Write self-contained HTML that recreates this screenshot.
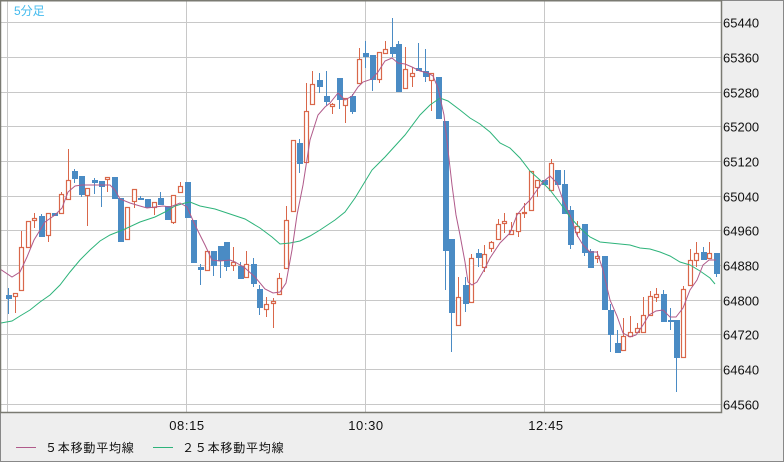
<!DOCTYPE html>
<html><head><meta charset="utf-8"><style>
html,body{margin:0;padding:0;background:#eeeeee;}
body{width:784px;height:462px;overflow:hidden;position:relative;font-family:"Liberation Sans","Noto Sans CJK JP",sans-serif;}
svg{position:absolute;left:0;top:0;}
</style></head><body>
<svg id="c" width="784" height="462" xmlns="http://www.w3.org/2000/svg">
<rect x="0" y="0" width="784" height="462" fill="#eeeeee"/>
<rect x="0.5" y="0.5" width="783" height="461" fill="none" stroke="#888" stroke-width="1"/>
<rect x="1" y="1" width="720" height="411" fill="#ffffff"/>
<g id="grid" stroke="#c8c8c8" stroke-width="1"></g>
<g id="cand"></g>
<polyline id="ma25" fill="none" stroke="#2db37a" stroke-width="1"/>
<polyline id="ma5" fill="none" stroke="#b05a8a" stroke-width="1"/>
<path d="M0.5 0 V412.5 H721.5 V0" fill="none" stroke="#7a7a72" stroke-width="1.5"/>
<line x1="0" y1="0.75" x2="722" y2="0.75" stroke="#7a7a72" stroke-width="1.5"/>
<text x="14" y="15" font-size="12" fill="#44bbee" font-family="Liberation Sans,'Noto Sans CJK JP',sans-serif">5分足</text>
<g id="labels" font-size="13" fill="#111" font-family="Liberation Sans,sans-serif"></g>
<g font-size="13" fill="#111" text-anchor="middle" letter-spacing="0.6">
<text x="187" y="430">08:15</text><text x="366" y="430">10:30</text><text x="546" y="430">12:45</text>
</g>
<line x1="16" y1="447.5" x2="36" y2="447.5" stroke="#b05a8a"/>
<line x1="153" y1="447.5" x2="173" y2="447.5" stroke="#2db37a"/>
<g font-size="12" fill="#111" letter-spacing="0.8" font-family="'Liberation Sans','Noto Sans CJK JP',sans-serif">
<text x="45" y="452">５本移動平均線</text>
<text x="182" y="452">２５本移動平均線</text>
</g>
</svg>
<script>
var NS="http://www.w3.org/2000/svg";
function el(p,t,a){var e=document.createElementNS(NS,t);for(var k in a)e.setAttribute(k,a[k]);p.appendChild(e);return e;}
var gy=[22.5,57.5,92.5,126.5,161.5,196.5,230.5,265.5,300.5,334.5,369.5,404.5];
var lab=[65440,65360,65280,65200,65120,65040,64960,64880,64800,64720,64640,64560];
var g=document.getElementById('grid');
gy.forEach(function(y){el(g,'line',{x1:1,x2:721,y1:y,y2:y});});
[7.5,186.5,365.5,544.5].forEach(function(x){el(g,'line',{x1:x,x2:x,y1:1,y2:412});});
var L=document.getElementById('labels');
gy.forEach(function(y,i){var t=el(L,'text',{x:723,y:y+5});t.textContent=lab[i];});
var C=[
['d',295,298,288,314],['u',293,296,293,313],['u',247,290,231,290],['u',221,247,221,247],['u',218,220,213,228],
['d',216,236,214,236],['u',213,235,213,242],['d',213,215,213,215],['u',194,213,192,213],['u',180,199,149,199],
['d',171,178,169,183],['d',176,194,176,197],['u',188,195,188,226],['d',180,182,178,194],['d',181,186,181,207],
['u',177,179,177,192],['d',177,198,177,198],['d',198,241,198,241],['u',207,239,207,239],['u',189,201,189,208],
['d',198,199,196,199],['d',199,207,199,207],['u',202,207,202,215],['d',198,204,192,204],['d',206,219,206,219],
['u',195,222,195,224],['u',186,192,182,192],['d',182,217,182,217],['d',220,262,220,262],['d',267,269,264,285],
['u',251,270,251,270],['d',251,265,251,276],['d',246,260,246,278],['d',242,266,242,271],['u',262,265,247,271],
['d',266,278,262,278],['u',264,277,251,277],['d',264,283,258,287],['d',289,307,285,315],['u',304,309,297,317],
['u',301,303,298,328],['u',278,294,273,294],['u',220,268,206,268],['u',140,211,140,211],['d',143,163,139,173],
['u',111,162,83,162],['u',84,104,71,104],['d',80,86,73,93],['d',96,101,71,106],['u',104,106,103,114],
['d',78,99,78,109],['u',98,105,98,123],['d',96,111,94,114],['u',59,83,48,83],['d',53,56,41,68],
['d',55,79,55,91],['u',52,79,52,83],['u',49,53,41,53],['d',47,53,18,57],['d',44,91,41,91],
['u',69,88,47,88],['u',73,76,67,87],['d',68,70,43,70],['d',71,76,49,82],['u',73,80,73,111],
['d',77,118,77,118],['d',121,250,121,290],['d',239,312,239,352],['u',297,325,277,325],['d',285,303,277,312],
['u',258,302,254,302],['d',253,257,249,267],['u',254,267,245,272],['u',242,248,241,252],['u',224,239,219,239],
['u',221,223,213,233],['u',230,234,222,235],['u',213,231,213,237],['u',212,213,203,218],['u',171,210,171,210],
['u',180,187,180,197],['d',180,184,180,184],['u',163,190,159,190],['d',170,184,170,184],['d',184,213,170,213],
['d',210,244,206,249],['u',226,232,221,237],['d',224,252,224,256],['d',251,267,249,267],['u',256,258,251,263],
['d',256,309,256,309],['d',310,334,304,352],['d',343,352,330,352],['u',336,350,318,350],['u',332,336,316,336],
['u',328,332,323,332],['u',315,332,297,332],['u',296,315,291,315],['u',294,297,288,302],['d',294,321,290,321],
['d',320,321,308,330],['d',320,357,320,392],['u',289,357,286,357],['u',260,285,249,285],['u',253,260,242,267],
['d',252,259,247,259],['u',253,258,242,258],['d',253,273,253,277]];
var cg=document.getElementById('cand');
C.forEach(function(c,i){
 var x=Math.round(8+i*6.617);var up=c[0]=='u';var col=up?'#d9674a':'#4a8bc4';
 el(cg,'line',{x1:x+0.5,x2:x+0.5,y1:c[3],y2:c[4],stroke:col,'stroke-width':1});
 var h=Math.max(c[2]-c[1],1);
 if(up){el(cg,'rect',{x:x-1.5,y:c[1]+0.5,width:4,height:h,fill:'#fff',stroke:col,'stroke-width':1.2});}
 else{el(cg,'rect',{x:x-2,y:c[1],width:6,height:h+1,fill:col});}
});
var m5="0,269 12,277 20,272 27,257 34,240 45,222 55,215 62,208 68,192 75,186 82,185 100,185 110,185 115,190 120,199 130,203 140,206 147,208 155,207 163,206 170,207 180,203 187,207 195,225 205,245 212,260 220,261 230,260 235,262 245,268 255,277 265,289 273,293 280,292 286,283 292,250 297,215 303,185 310,140 318,115 325,107 330,103 338,93 345,100 352,96 358,87 363,82 372,79 378,72 385,61 392,58 398,63 405,64 412,67 420,71 428,73 433,76 438,88 444,115 448,150 452,185 456,215 460,235 465,262 468,282 472,285 477,282 484,270 490,258 500,243 510,233 517,215 525,205 530,200 537,190 543,182 550,176 557,183 563,200 570,215 577,235 583,245 590,252 597,252 603,270 610,300 617,316 623,333 630,337 636,335 643,325 649,315 656,311 663,310 670,317 676,317 683,308 690,290 697,280 703,265 709,260 716,260";
var m25="1,323 12,321 20,316 30,310 40,302 50,295 60,285 70,272 80,260 90,250 100,241 110,235 125,229 140,222 155,217 165,212 175,206 185,203 190,202 200,206 215,209 230,214 245,219 260,228 272,237 280,244 290,243 300,241 310,236 320,230 335,220 345,212 355,198 372,170 385,157 395,146 405,135 420,115 430,105 440,98 448,101 460,110 470,118 480,124 490,132 500,143 510,148 520,158 530,171 540,180 550,190 560,203 570,217 580,228 590,237 600,242 610,243 620,244 630,245 640,248 650,249 660,252 670,256 680,262 690,265 700,271 710,278 715,284";
document.getElementById('ma5').setAttribute('points',m5);
document.getElementById('ma25').setAttribute('points',m25);
</script>
</body></html>
